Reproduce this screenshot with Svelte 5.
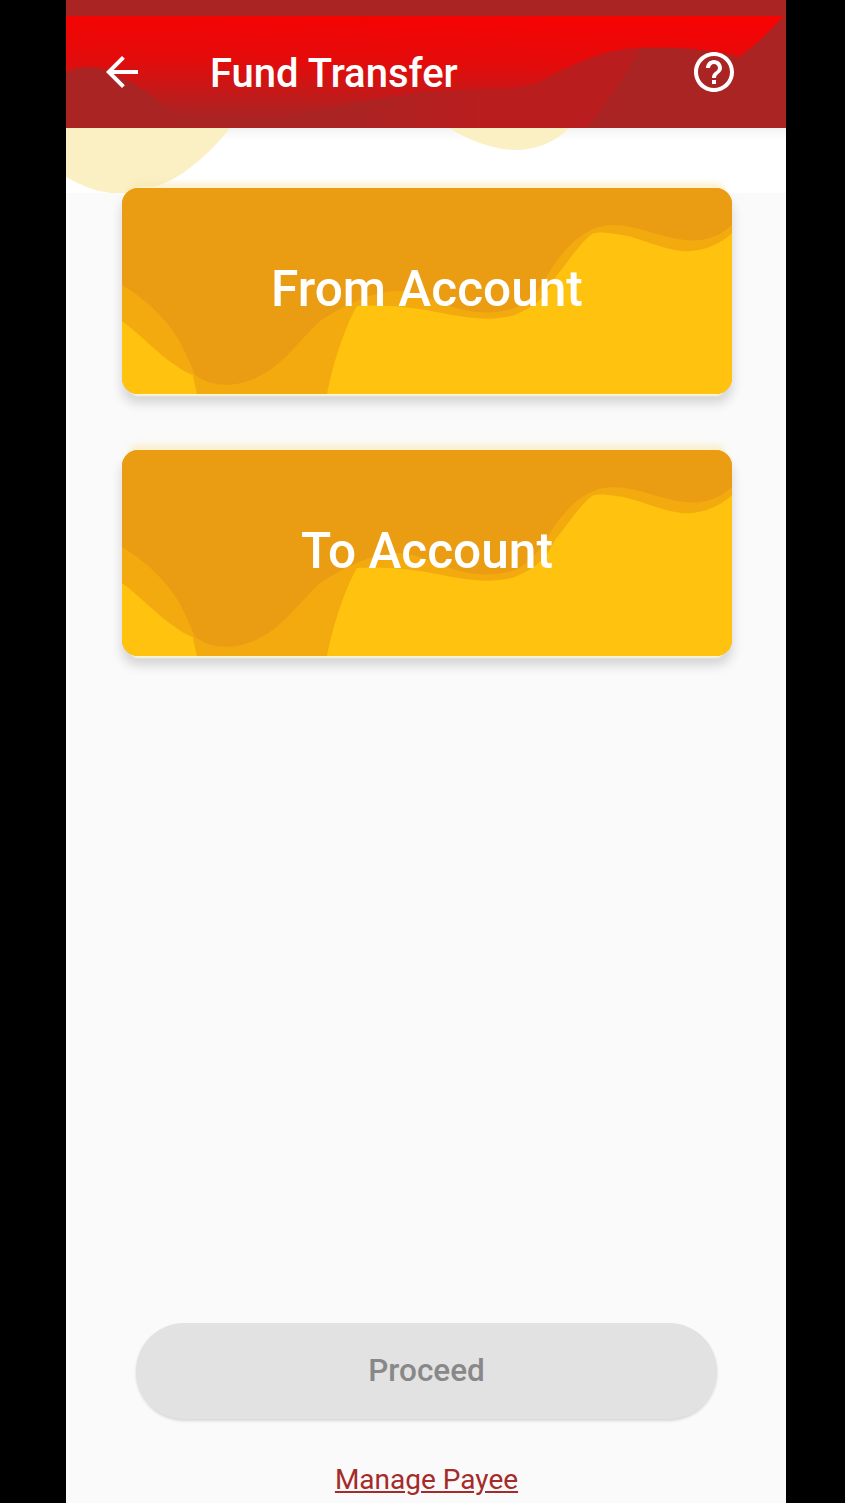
<script>
  const cards = ['From Account', 'To Account'];
</script>

<div class="screen">
  <svg class="cream" viewBox="0 0 720 65" aria-hidden="true">
    <path d="M0 0H164C150 18 120 50 88 59C70 65 55 66 45 65C28 63 12 56 0 49Z" />
    <path d="M383 0C405 14 430 22 450 22C470 22 490 14 503 0Z" />
  </svg>

  <header>
    <svg class="wave" viewBox="0 0 720 128" preserveAspectRatio="none" aria-hidden="true">
      <defs>
        <linearGradient id="mid" gradientUnits="userSpaceOnUse" x1="280" y1="0" x2="420" y2="0">
          <stop offset="0" stop-color="#ab2424" />
          <stop offset="1" stop-color="#ba1d1d" />
        </linearGradient>
        <linearGradient id="red" gradientUnits="userSpaceOnUse" x1="700" y1="8" x2="698" y2="128">
          <stop offset="0" stop-color="#fb0000" />
          <stop offset="0.5" stop-color="#e40b0b" />
          <stop offset="0.72" stop-color="#cc1616" />
          <stop offset="0.9" stop-color="#b41f1f" />
          <stop offset="1" stop-color="#ab2424" />
        </linearGradient>
      </defs>
      <path fill="url(#mid)" d="M200 40H580C565 65 545 100 520 128H200Z" />
      <path
        fill="url(#red)"
        d="M0 16H717C705 30 690 45 673 57C650 50 600 45 560 49C530 53 505 65 470 84C450 90 420 88 360 92C310 98 260 108 213 117C190 125 150 128 117 127C100 105 70 80 33 68C20 66 10 68 0 72Z"
      />
    </svg>
    <button class="icon" aria-label="Back">
      <svg viewBox="0 0 24 24" width="48" height="48"><path d="M20 11H7.83l5.59-5.59L12 4l-8 8 8 8 1.41-1.41L7.83 13H20v-2z" /></svg>
    </button>
    <h1>Fund Transfer</h1>
    <button class="icon help" aria-label="Help">
      <svg viewBox="0 0 24 24" width="48" height="48"><path d="M11 18h2v-2h-2v2zm1-16C6.48 2 2 6.48 2 12s4.48 10 10 10 10-4.48 10-10S17.52 2 12 2zm0 18c-4.41 0-8-3.59-8-8s3.59-8 8-8 8 3.59 8 8-3.59 8-8 8zm0-14c-2.21 0-4 1.79-4 4h2c0-1.1.9-2 2-2s2 .9 2 2c0 2-3 1.75-3 5h2c0-2.25 3-2.5 3-5 0-2.21-1.79-4-4-4z" /></svg>
    </button>
  </header>

  <div class="band"></div>

  <main>
    {#each cards as label}
      <div class="card">
        <svg class="card-bg" viewBox="0 0 610 206" aria-hidden="true">
          <path class="dark" d="M0 0H610V37C596 50 580 54 563 52C540 50 515 37 490 37C465 38 448 55 433 75C422 92 416 108 393 120C370 128 345 124 328 118C305 110 290 102 271 103C250 105 225 115 198 133C175 155 160 178 134 190C115 199 90 200 73 187C68 175 65 168 61 160C52 140 30 115 0 97Z" />
          <path class="yellow" d="M610 45C600 55 580 65 559 63C535 60 515 48 494 46C482 44 474 44 470 46C458 55 445 75 433 90C425 105 420 115 393 127C370 134 345 130 320 125C295 120 265 116 235 118C225 135 212 170 205 206H610Z" />
          <path class="yellow" d="M0 133C18 146 35 165 53 177C60 182 65 185 71 187C72 195 74 200 75 206H0Z" />
        </svg>
        <span>{label}</span>
      </div>
    {/each}
  </main>

  <footer>
    <button class="proceed">Proceed</button>
    <a href="#payee" class="link">Manage Payee</a>
  </footer>
</div>

<style>
  :global(body) {
    margin: 0;
    background: #000;
  }
  .screen {
    position: relative;
    width: 720px;
    height: 1503px;
    margin-left: 66px;
    background: #fafafa;
    display: flex;
    flex-direction: column;
    overflow: hidden;
    font-family: Roboto, "Noto Sans", sans-serif;
  }
  header {
    position: relative;
    z-index: 2;
    flex: none;
    height: 128px;
    box-sizing: border-box;
    padding: 16px 48px 0 32px;
    background: #ab2424;
    display: flex;
    align-items: center;
    color: #fff;
  }
  .wave {
    position: absolute;
    inset: 0;
    width: 100%;
    height: 100%;
  }
  .icon {
    position: relative;
    flex: none;
    width: 48px;
    height: 48px;
    padding: 0;
    border: 0;
    background: none;
    fill: #fff;
  }
  .help {
    margin-left: auto;
  }
  h1 {
    position: relative;
    margin: 4px 0 0 64px;
    font-size: 40px;
    font-weight: 500;
    line-height: 48px;
  }
  .band {
    flex: none;
    height: 65px;
    background: linear-gradient(#f3f3f3, #fff 12px);
  }
  .cream {
    position: absolute;
    z-index: 1;
    left: 0;
    top: 128px;
    width: 720px;
    height: 65px;
    fill: #fbf0c4;
  }
  main {
    position: relative;
    z-index: 1;
    flex: 1;
    display: flex;
    flex-direction: column;
    gap: 56px;
    padding: 0 54px 0 56px;
    margin-top: -5px;
  }
  .card {
    position: relative;
    height: 206px;
    border-radius: 16px;
    background: #f3aa0f;
    box-shadow:
      0 -9px 2px -8px #fff6d8,
      0 -13px 6px -8px rgba(250, 225, 160, 0.55),
      0 10px 2px -8px #fff8dc,
      0 9px 12px rgba(0, 0, 0, 0.16);
    display: flex;
    align-items: center;
    justify-content: center;
    color: #fff;
    font-size: 49.6px;
    font-weight: 500;
  }
  .card-bg {
    position: absolute;
    inset: 0;
    width: 100%;
    height: 100%;
    border-radius: 16px;
  }
  .dark {
    fill: #ea9d13;
  }
  .yellow {
    fill: #ffc20e;
  }
  .card span {
    position: relative;
    margin-top: -4px;
  }
  footer {
    position: relative;
    z-index: 1;
    flex: none;
    display: flex;
    flex-direction: column;
    align-items: center;
    padding: 0 69px 5px 70px;
  }
  .proceed {
    width: 100%;
    height: 96px;
    border: 0;
    border-radius: 48px;
    background: #e2e2e2;
    box-shadow: 0 2px 3px rgba(0, 0, 0, 0.14);
    color: #888;
    font: 500 31.5px Roboto, sans-serif;
    padding-bottom: 3px;
  }
  .link {
    margin-top: 43px;
    color: #a52a2a;
    font-size: 28px;
    line-height: 36px;
    text-decoration: underline;
  }
</style>
